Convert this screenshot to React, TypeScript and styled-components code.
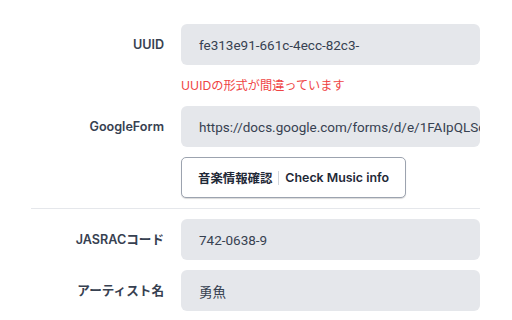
import React from "react";
import styled, { createGlobalStyle } from "styled-components";

const Global = createGlobalStyle`
  html, body { margin: 0; padding: 0; background: #ffffff; }
  body { font-family: Inter, "Noto Sans CJK JP", sans-serif; }
`;

const Page = styled.div`
  display: flex;
  flex-direction: column;
  gap: 10px;
  padding: 24px 0 0 31px;
  width: 449px;
`;

const Row = styled.div`
  display: flex;
  align-items: flex-start;
  gap: 17px;
`;

const Label = styled.label`
  width: 133px;
  flex: none;
  text-align: right;
  line-height: 41px;
  height: 41px;
  font-size: 12.6px;
  font-weight: 600;
  color: #374151;
  white-space: nowrap;
`;

const Field = styled.div`
  flex: 1;
  min-width: 0;
  display: flex;
  flex-direction: column;
  align-items: flex-start;
  gap: 10px;
`;

const Input = styled.div`
  box-sizing: border-box;
  width: 100%;
  height: 41px;
  padding: 0 18px;
  background: #e5e7eb;
  border-radius: 6px;
  display: flex;
  align-items: center;
  font-family: Roboto, "Noto Sans CJK JP", sans-serif;
  font-size: 13.5px;
  color: #374151;
  white-space: nowrap;
  overflow: hidden;
`;

const ErrorText = styled.div`
  font-size: 12.2px;
  line-height: 21px;
  color: #ef4444;
`;

const Button = styled.button`
  box-sizing: border-box;
  height: 41px;
  padding: 0 16px;
  background: #ffffff;
  border: 1px solid #9ca3af;
  border-radius: 5px;
  box-shadow: 0 1px 1px rgba(0, 0, 0, 0.15);
  font-family: inherit;
  font-size: 12.4px;
  font-weight: 600;
  color: #1f2937;
  display: flex;
  align-items: center;
  gap: 6px;
`;

const Sep = styled.span`
  width: 1px;
  height: 14px;
  background: #d1d5db;
`;

const Divider = styled.hr`
  margin: 0;
  border: 0;
  height: 1px;
  background: #e5e7eb;
`;

export default function App() {
  return (
    <>
      <Global />
      <Page>
        <Row>
          <Label>UUID</Label>
          <Field>
            <Input>fe313e91-661c-4ecc-82c3-</Input>
            <ErrorText>UUIDの形式が間違っています</ErrorText>
          </Field>
        </Row>
        <Row>
          <Label>GoogleForm</Label>
          <Field>
            <Input>https://docs.google.com/forms/d/e/1FAIpQLSd</Input>
            <Button>
              音楽情報確認<Sep />Check Music info
            </Button>
          </Field>
        </Row>
        <Divider />
        <Row>
          <Label>JASRACコード</Label>
          <Field>
            <Input>742-0638-9</Input>
          </Field>
        </Row>
        <Row>
          <Label>アーティスト名</Label>
          <Field>
            <Input>勇魚</Input>
          </Field>
        </Row>
      </Page>
    </>
  );
}
